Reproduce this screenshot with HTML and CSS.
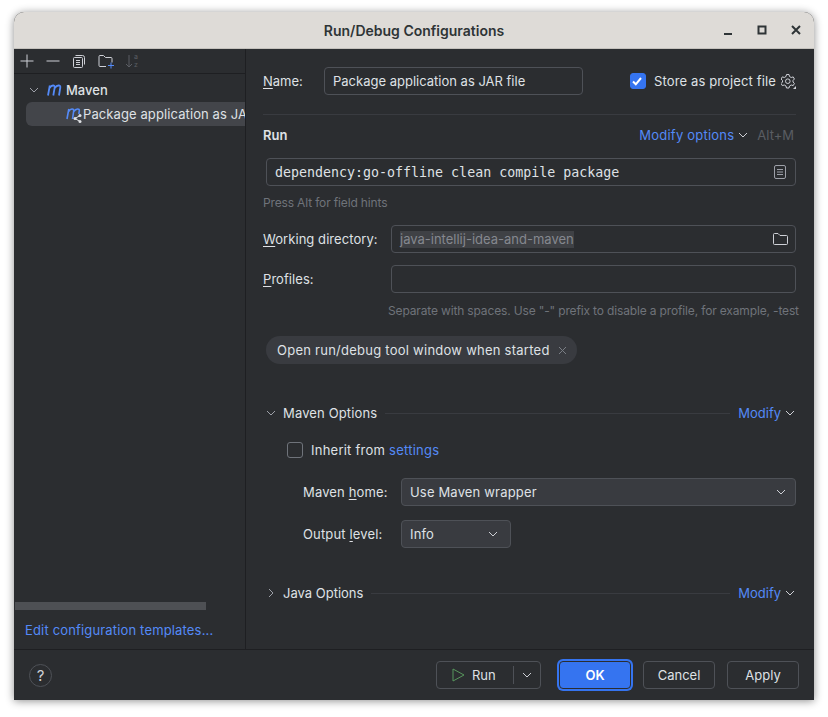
FILE: index.html
```html
<!DOCTYPE html>
<html lang="en">
<head>
    <meta charset="UTF-8">
    <title>Run/Debug Configurations</title>
    <link rel="stylesheet" href="styles.css">
</head>
<body>
    <div class="window">
        <div class="titlebar">
            <span class="title">Run/Debug Configurations</span>
            <div class="window-buttons">
                <svg width="10" height="10" viewBox="0 0 10 10"><path d="M1 9h8" stroke="#2e3436" stroke-width="2"/></svg>
                <svg width="10" height="10" viewBox="0 0 10 10"><path d="M1.5 1.5h7v7h-7z" fill="none" stroke="#2e3436" stroke-width="2"/></svg>
                <svg width="10" height="10" viewBox="0 0 10 10"><path d="M1 1l8 8M9 1l-8 8" stroke="#2e3436" stroke-width="2"/></svg>
            </div>
        </div>

        <div class="content">
            <div class="sidebar">
                <div class="toolbar">
                    <svg width="14" height="14" viewBox="0 0 14 14"><path d="M7 .5v13M.5 7h13" stroke="#ced0d6" fill="none"/></svg>
                    <svg width="14" height="14" viewBox="0 0 14 14"><path d="M.5 7h13" stroke="#ced0d6" fill="none"/></svg>
                    <svg width="14" height="14" viewBox="0 0 14 14"><path d="M3.5 1.5h7a2 2 0 0 1 2 2v7M3 3.500h6.500a1 1 0 0 1 1 1v8a1 1 0 0 1-1 1h-7a1 1 0 0 1-1-1v-8a1 1 0 0 1 1-1zM4 6.500h4M4 8.500h4M4 10.500h4" stroke="#ced0d6" fill="none"/></svg>
                    <svg width="16" height="16" viewBox="0 0 16 16"><path d="M8 13.500H2a1 1 0 0 1-1-1v-9a1 1 0 0 1 1-1h3.500l2 2H13a1 1 0 0 1 1 1v4" stroke="#ced0d6" fill="none"/><path d="M13 9.500v6M10 12.500h6" stroke="#548af7" fill="none"/></svg>
                    <div class="sort">
                        <svg width="8" height="14" viewBox="0 0 8 14"><path d="M4 1v12M1 10l3 3 3-3" stroke="#5a5d63" fill="none"/></svg>
                        <span class="sort-letters">a<br>z</span>
                    </div>
                </div>
                <div class="tree">
                    <div class="tree-row">
                        <svg class="arrow" width="10" height="10" viewBox="0 0 10 10"><path d="M1 3l4 4 4-4" stroke="#9da0a8" fill="none"/></svg>
                        <svg class="maven" width="16" height="12" viewBox="0 0 16 12"><path d="M1 11.500L2.800 1.500M2.600 4C4.500 1 8 .5 7.700 3.500L6.300 11.500M7.800 4C10 1 13.800 .5 13.300 3.500L12 11.500" stroke="#548af7" stroke-width="1.800" fill="none"/></svg>
                        <span class="tree-root">Maven</span>
                    </div>
                    <div class="tree-row selected">
                        <svg class="maven-run" width="18" height="18" viewBox="0 0 18 18"><path d="M1 14L2.800 4M2.600 6.500C4.500 3.500 8 3 7.700 6L6.500 14M7.800 6.500C10 3.500 13.800 3 13.300 6L12.800 9" stroke="#548af7" stroke-width="1.600" fill="none"/><path d="M9 13.500l5-3M9 13.500l5 3" stroke="#dfe1e5" fill="none"/><circle cx="9" cy="13.500" r="1.500" fill="#dfe1e5"/><circle cx="14" cy="10.500" r="1.500" fill="#dfe1e5"/><circle cx="14" cy="16.500" r="1.500" fill="#dfe1e5"/></svg>
                        <span>Package application as JAR file</span>
                    </div>
                </div>
                <div class="scrollbar"><div class="scrollbar-thumb"></div></div>
                <a class="link templates">Edit configuration templates...</a>
            </div>

            <div class="main">
                <div class="row name-row">
                    <label class="label name-label"><u>N</u>ame:</label>
                    <div class="field name-field">Package application as JAR file</div>
                    <div class="store">
                        <span class="checkbox checked">
                            <svg width="12" height="12" viewBox="0 0 12 12"><path d="M2 6.500l2.800 2.800L10 3" stroke="#fff" stroke-width="2" fill="none"/></svg>
                        </span>
                        <span>Store as project file</span>
                        <svg width="15" height="16" viewBox="0 0 15 16"><path d="M5.500 1.500h2.500l.5 2 1.700 1 2-.6 1.200 2.100-1.400 1.500v1.500l1.400 1.500-1.200 2.100-2-.6-1.700 1-.5 2H5.500l-.5-2-1.700-1-2 .6L.1 10.500 1.500 9V7.500L.1 6l1.200-2.100 2 .6 1.700-1z" stroke="#ced0d6" fill="none"/><circle cx="6.800" cy="8.200" r="2.300" stroke="#ced0d6" fill="none"/><path d="M15 13v3h-3z" fill="#ced0d6"/></svg>
                    </div>
                </div>
                <div class="divider"></div>

                <div class="row run-row">
                    <span class="section-title">Run</span>
                    <a class="link modify-options">Modify options</a>
                    <svg class="chevron" width="10" height="10" viewBox="0 0 10 10"><path d="M1 3l4 4 4-4" stroke="#ced0d6" fill="none"/></svg>
                    <span class="shortcut">Alt+M</span>
                </div>

                <div class="field command-field">
                    <span class="mono">dependency:go-offline clean compile package</span>
                    <svg width="14" height="14" viewBox="0 0 14 14"><rect x="1.500" y=".5" width="11" height="13" rx="1.500" stroke="#9da0a8" fill="none"/><path d="M4 4.500h6M4 7h6M4 9.500h6" stroke="#9da0a8" fill="none"/></svg>
                </div>
                <p class="hint field-hints">Press Alt for field hints</p>

                <div class="row workdir-row">
                    <label class="label form-label"><u>W</u>orking directory:</label>
                    <div class="field workdir-field">
                        <span class="selected-text">java-intellij-idea-and-maven</span>
                        <svg class="folder" width="15" height="12" viewBox="0 0 15 12"><path d="M1.500 11.500a1 1 0 0 1-1-1v-9a1 1 0 0 1 1-1h3.500l2 2h6.500a1 1 0 0 1 1 1v7a1 1 0 0 1-1 1z" stroke="#ced0d6" fill="none"/></svg>
                    </div>
                </div>
                <div class="row profiles-row">
                    <label class="label form-label"><u>P</u>rofiles:</label>
                    <div class="field profiles-field"></div>
                </div>
                <p class="hint profiles-hint">Separate with spaces. Use "-" prefix to disable a profile, for example, -test</p>

                <div class="chip">
                    <span>Open run/debug tool window when started</span>
                    <svg width="9" height="9" viewBox="0 0 9 9"><path d="M1 1l7 7M8 1L1 8" stroke="#7a7e85" fill="none"/></svg>
                </div>

                <div class="section-header maven-options">
                    <svg class="section-arrow" width="10" height="10" viewBox="0 0 10 10"><path d="M1 3l4 4 4-4" stroke="#9da0a8" fill="none"/></svg>
                    <span class="section-name">Maven Options</span>
                    <div class="section-line"></div>
                    <a class="link">Modify</a>
                    <svg class="modify-chevron" width="10" height="10" viewBox="0 0 10 10"><path d="M1 3l4 4 4-4" stroke="#ced0d6" fill="none"/></svg>
                </div>

                <div class="row inherit-row">
                    <span class="checkbox"></span>
                    <span>Inherit from <a class="link">settings</a></span>
                </div>

                <div class="row home-row">
                    <label class="label select-label">Maven <u>h</u>ome:</label>
                    <div class="select home-select">
                        <span>Use Maven wrapper</span>
                        <svg width="10" height="10" viewBox="0 0 10 10"><path d="M1 3l4 4 4-4" stroke="#ced0d6" fill="none"/></svg>
                    </div>
                </div>
                <div class="row output-row">
                    <label class="label select-label">Output <u>l</u>evel:</label>
                    <div class="select output-select">
                        <span>Info</span>
                        <svg width="10" height="10" viewBox="0 0 10 10"><path d="M1 3l4 4 4-4" stroke="#ced0d6" fill="none"/></svg>
                    </div>
                </div>

                <div class="section-header java-options">
                    <svg class="section-arrow" width="10" height="10" viewBox="0 0 10 10"><path d="M3 1l4 4-4 4" stroke="#9da0a8" fill="none"/></svg>
                    <span>Java Options</span>
                    <div class="section-line"></div>
                    <a class="link">Modify</a>
                    <svg class="modify-chevron" width="10" height="10" viewBox="0 0 10 10"><path d="M1 3l4 4 4-4" stroke="#ced0d6" fill="none"/></svg>
                </div>
            </div>
        </div>

        <div class="footer">
            <div class="help">?</div>
            <div class="footer-buttons">
                <div class="button run-button">
                    <div class="run-part">
                        <svg width="13" height="14" viewBox="0 0 13 14"><path d="M1 1l11 6-11 6z" stroke="#57965c" fill="none"/></svg>
                        <span>Run</span>
                    </div>
                    <div class="run-arrow">
                        <svg width="10" height="10" viewBox="0 0 10 10"><path d="M1 3l4 4 4-4" stroke="#ced0d6" fill="none"/></svg>
                    </div>
                </div>
                <div class="button ok-button">OK</div>
                <div class="button">Cancel</div>
                <div class="button">Apply</div>
            </div>
        </div>
    </div>
</body>
</html>
```

FILE: styles.css
```css
html, body {
    height: 100%;
}

body {
    margin: 0;
    padding: 12px 14px 0;
    box-sizing: border-box;
    background-color: #ffffff;
    font-family: Inter, "Noto Sans", sans-serif;
    font-size: 13px;
    color: #dfe1e5;
    overflow: hidden;
}

p {
    margin: 0;
}

u {
    text-underline-offset: 2px;
}

svg {
    display: block;
    flex: none;
}

.link {
    color: #548af7;
}

.window {
    width: 800px;
    height: 688px;
    display: flex;
    flex-direction: column;
    background: #2b2d30;
    border-radius: 10px 10px 0 0;
    box-shadow: 0 1px 8px rgba(0,0,0,0.45);
    overflow: hidden;
}

/* title bar */
.titlebar {
    height: 36px;
    flex: none;
    display: flex;
    align-items: center;
    justify-content: center;
    position: relative;
    background: #dedbd7;
    border-bottom: 1px solid #c4c1bc;
}

.title {
    font-size: 14px;
    font-weight: 600;
    color: #2e3436;
}

.window-buttons {
    position: absolute;
    right: 13px;
    top: 13px;
    display: flex;
    gap: 24px;
}

.content {
    flex: 1;
    display: flex;
    min-height: 0;
}

/* left tree */
.sidebar {
    width: 231px;
    flex: none;
    display: flex;
    flex-direction: column;
    border-right: 1px solid #1e1f22;
    overflow: hidden;
}

.toolbar {
    height: 24px;
    flex: none;
    display: flex;
    align-items: center;
    gap: 12px;
    padding-left: 6px;
    border-bottom: 1px solid #1e1f22;
}

.sort {
    display: flex;
    align-items: center;
    gap: 1px;
    margin-left: -1px;
}

.sort-letters {
    font-size: 7px;
    line-height: 8px;
    color: #5a5d63;
}

.tree {
    flex: 1;
    padding-top: 4px;
}

.tree-row {
    height: 24px;
    display: flex;
    align-items: center;
    white-space: nowrap;
}

.arrow {
    margin-left: 15px;
}

.maven {
    margin-left: 8px;
}

.tree-root {
    margin-left: 3px;
    font-weight: 500;
}

.selected {
    margin-left: 12px;
    padding-left: 41px;
    background: #43454a;
    border-radius: 6px 0 0 6px;
    overflow: hidden;
    letter-spacing: 0.1px;
}

.maven-run {
    flex: none;
    margin-left: -1px;
    margin-right: -1px;
}

.scrollbar {
    height: 8px;
    margin-left: 1px;
    flex: none;
}

.scrollbar-thumb {
    width: 191px;
    height: 8px;
    background: #4e5054;
}

.templates {
    margin: 11px 0 10px 11px;
    line-height: 18px;
    flex: none;
    white-space: nowrap;
    letter-spacing: 0.16px;
}

/* right form */
.main {
    flex: 1;
    padding: 18px 18px 0 17px;
    min-width: 0;
}

.row {
    display: flex;
    align-items: center;
}

.name-row {
    height: 28px;
}

.name-label {
    width: 61px;
    flex: none;
}

.field {
    height: 28px;
    box-sizing: border-box;
    display: flex;
    align-items: center;
    justify-content: space-between;
    border: 1px solid #4e5157;
    border-radius: 4px;
    padding: 0 8px;
}

.name-field {
    width: 259px;
    flex: none;
}

.store {
    display: flex;
    align-items: center;
    gap: 8px;
    margin-left: 47px;
    white-space: nowrap;
    letter-spacing: 0.13px;
}

.store svg:last-child {
    margin-left: -3px;
}

.checkbox {
    width: 16px;
    height: 16px;
    box-sizing: border-box;
    flex: none;
    display: flex;
    align-items: center;
    justify-content: center;
    border: 1px solid #6f737a;
    border-radius: 3px;
}

.checked {
    background: #3574f0;
    border-color: #3574f0;
}

.divider {
    height: 1px;
    margin-top: 19px;
    background: #393b40;
}

.run-row {
    height: 20px;
    margin-top: 10px;
}

.section-title {
    font-weight: 600;
}

.modify-options {
    margin-left: auto;
    letter-spacing: 0.22px;
}

.chevron {
    margin-left: 4px;
}

.shortcut {
    margin: 0 2px 0 9px;
    color: #5a5d63;
}

.command-field {
    margin: 13px 0 0 3px;
    padding-right: 8px;
}

.mono {
    font-family: "DejaVu Sans Mono", monospace;
    font-size: 13.3px;
}

.hint {
    font-size: 12px;
    line-height: 18px;
    color: #6f737a;
    white-space: nowrap;
    letter-spacing: -0.15px;
}

.field-hints {
    margin-top: 8px;
}

.workdir-row {
    margin-top: 13px;
}

.profiles-row {
    margin-top: 12px;
}

.form-label {
    width: 128px;
    flex: none;
    letter-spacing: 0.06px;
}

.workdir-field, .profiles-field {
    flex: 1;
}

.selected-text {
    line-height: 17px;
    background: #3f4145;
    color: #85888f;
}

.folder {
    margin-right: -1px;
}

.profiles-hint {
    margin: 9px 0 0 125px;
}

.chip {
    width: 311px;
    height: 28px;
    box-sizing: border-box;
    margin: 16px 0 0 3px;
    padding: 0 10px 0 11px;
    display: flex;
    align-items: center;
    justify-content: space-between;
    background: #393b40;
    border-radius: 14px;
    letter-spacing: 0.25px;
}

.section-header {
    height: 20px;
    display: flex;
    align-items: center;
}

.maven-options {
    margin-top: 39px;
}

.section-name {
    letter-spacing: 0.14px;
}

.java-options {
    margin-top: 35px;
}

.section-arrow {
    margin: 0 7px 0 3px;
}

.section-line {
    flex: 1;
    height: 1px;
    margin: 0 8px;
    background: #393b40;
}

.modify-chevron {
    margin-left: 4px;
    margin-right: 1px;
}

.inherit-row {
    height: 20px;
    margin: 17px 0 0 24px;
    gap: 8px;
    letter-spacing: 0.24px;
}

.home-row {
    margin: 18px 0 0 40px;
}

.output-row {
    margin: 14px 0 0 40px;
}

.select-label {
    width: 98px;
    flex: none;
    letter-spacing: 0.15px;
}

.select {
    height: 28px;
    box-sizing: border-box;
    display: flex;
    align-items: center;
    justify-content: space-between;
    padding: 0 9px 0 8px;
    background: #393b40;
    border: 1px solid #4e5157;
    border-radius: 4px;
    letter-spacing: 0.17px;
}

.home-select {
    flex: 1;
}

.output-select {
    width: 110px;
}

.output-select svg {
    margin-right: 3px;
}

/* bottom buttons */
.footer {
    height: 50px;
    flex: none;
    display: flex;
    align-items: center;
    padding-left: 15px;
    border-top: 1px solid #1e1f22;
}

.help {
    width: 23px;
    height: 23px;
    box-sizing: border-box;
    display: flex;
    align-items: center;
    justify-content: center;
    border: 1px solid #4e5157;
    border-radius: 50%;
    font-size: 15px;
    color: #ced0d6;
}

.footer-buttons {
    display: flex;
    align-items: center;
    gap: 12px;
    margin-left: auto;
    margin-right: 15px;
}

.button {
    width: 72px;
    height: 28px;
    box-sizing: border-box;
    display: flex;
    align-items: center;
    justify-content: center;
    border: 1px solid #4e5157;
    border-radius: 4px;
}

.run-button {
    width: 105px;
    margin-right: 6px;
    justify-content: flex-start;
}

.run-part {
    width: 77px;
    height: 18px;
    box-sizing: border-box;
    padding-left: 15px;
    display: flex;
    align-items: center;
    gap: 7px;
    border-right: 1px solid #4e5157;
}

.run-arrow {
    flex: 1;
    display: flex;
    justify-content: center;
}

.ok-button {
    background: #3574f0;
    border-color: #2b2d30;
    box-shadow: 0 0 0 2px #3574f0;
    color: #ffffff;
    font-weight: 600;
}
```
